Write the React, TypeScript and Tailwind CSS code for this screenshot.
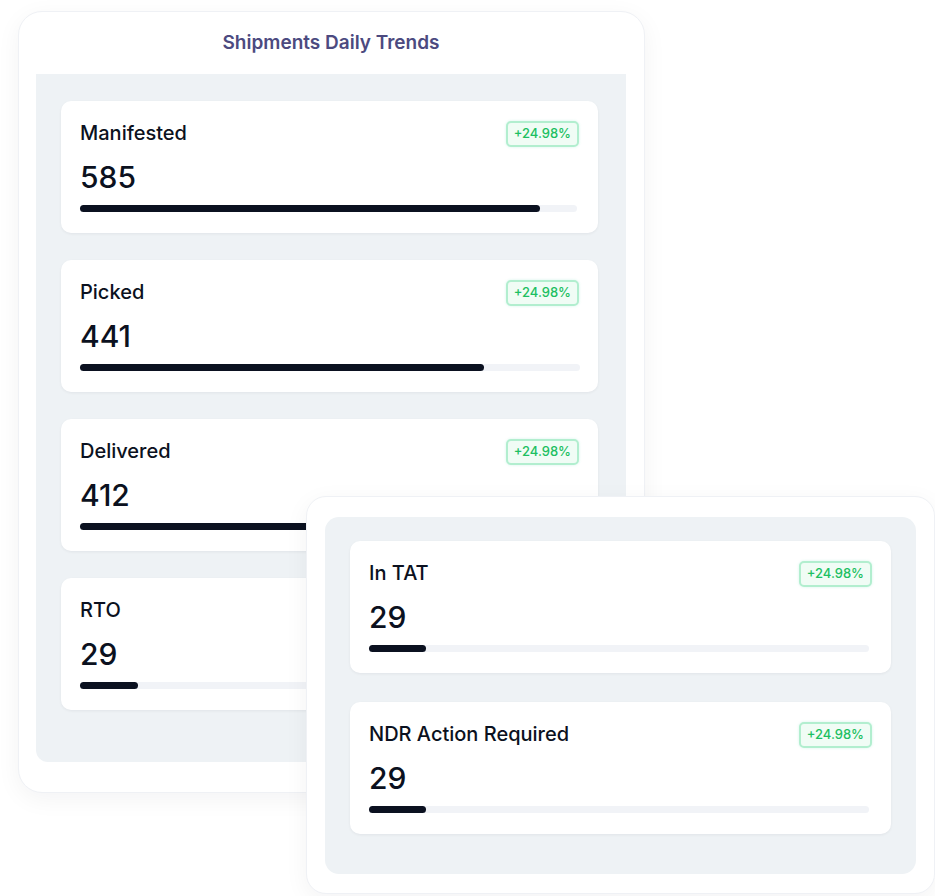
import React from 'react';

interface Metric {
  label: string;
  value: string;
  change: string;
  fill: number;
  trackWidth?: string;
}

const dailyTrends: Metric[] = [
  { label: 'Manifested', value: '585', change: '+24.98%', fill: 92.5, trackWidth: 'w-[497px]' },
  { label: 'Picked', value: '441', change: '+24.98%', fill: 80.8, trackWidth: 'w-[500px]' },
  { label: 'Delivered', value: '412', change: '+24.98%', fill: 76 },
  { label: 'RTO', value: '29', change: '+24.98%', fill: 11.5 },
];

const tatMetrics: Metric[] = [
  { label: 'In TAT', value: '29', change: '+24.98%', fill: 11.4 },
  { label: 'NDR Action Required', value: '29', change: '+24.98%', fill: 11.4 },
];

const MetricCard: React.FC<{ metric: Metric }> = ({ metric }) => {
  return (
    <div className="bg-white rounded-[10px] shadow-[0_1px_3px_rgba(15,23,42,0.06)] px-[19px] pt-[20px] pb-[21px]">
      <div className="flex items-center justify-between h-[26px]">
        <span className="text-[20px] leading-[24px] font-medium text-[#0b1120] -mt-[2px]">{metric.label}</span>
        <span className="h-[26px] px-[6px] flex items-center rounded-[5px] border-2 border-[#b2eecf] bg-[#f0fcf5] text-[13px] font-medium text-[#1dbf62] shadow-[0_0_3px_rgba(52,211,153,0.2)]">
          {metric.change}
        </span>
      </div>
      <div className="mt-[12px] text-[30px] leading-[36px] font-medium text-[#0b1120]">{metric.value}</div>
      <div className={`mt-[10px] h-[7px] rounded-full bg-[#f1f3f7] ${metric.trackWidth ?? 'w-[500px]'}`}>
        <div className="h-full rounded-full bg-[#0b1120]" style={{ width: `${metric.fill}%` }} />
      </div>
    </div>
  );
};

export default function App() {
  return (
    <div className="relative w-[935px] h-[896px] bg-white overflow-hidden" style={{ fontFamily: 'Inter, "Noto Sans", sans-serif' }}>
      <div className="ml-[18px] mt-[11px] w-[627px] bg-white rounded-[24px] border border-[#eff1f5] shadow-[0_6px_24px_rgba(15,23,42,0.05)] pl-[17px] pr-[18px] pb-[30px]">
        <h2 className="h-[62px] flex items-center justify-center text-[19px] font-semibold text-[#4c4a80]">
          Shipments Daily Trends
        </h2>
        <div className="bg-[#eef2f5] rounded-b-[12px] pl-[25px] pr-[28px] pt-[27px] pb-[52px] flex flex-col gap-[27px]">
          {dailyTrends.map((m) => (
            <MetricCard key={m.label} metric={m} />
          ))}
        </div>
      </div>

      <div className="absolute left-[306px] top-[496px] w-[629px] bg-white rounded-[20px] border border-[#eff1f5] shadow-[0_6px_24px_rgba(15,23,42,0.05)] px-[18px] pt-[20px] pb-[19px]">
        <div className="bg-[#eef2f5] rounded-[14px] px-[25px] pt-[24px] pb-[40px] flex flex-col gap-[29px]">
          {tatMetrics.map((m) => (
            <MetricCard key={m.label} metric={m} />
          ))}
        </div>
      </div>
    </div>
  );
}
